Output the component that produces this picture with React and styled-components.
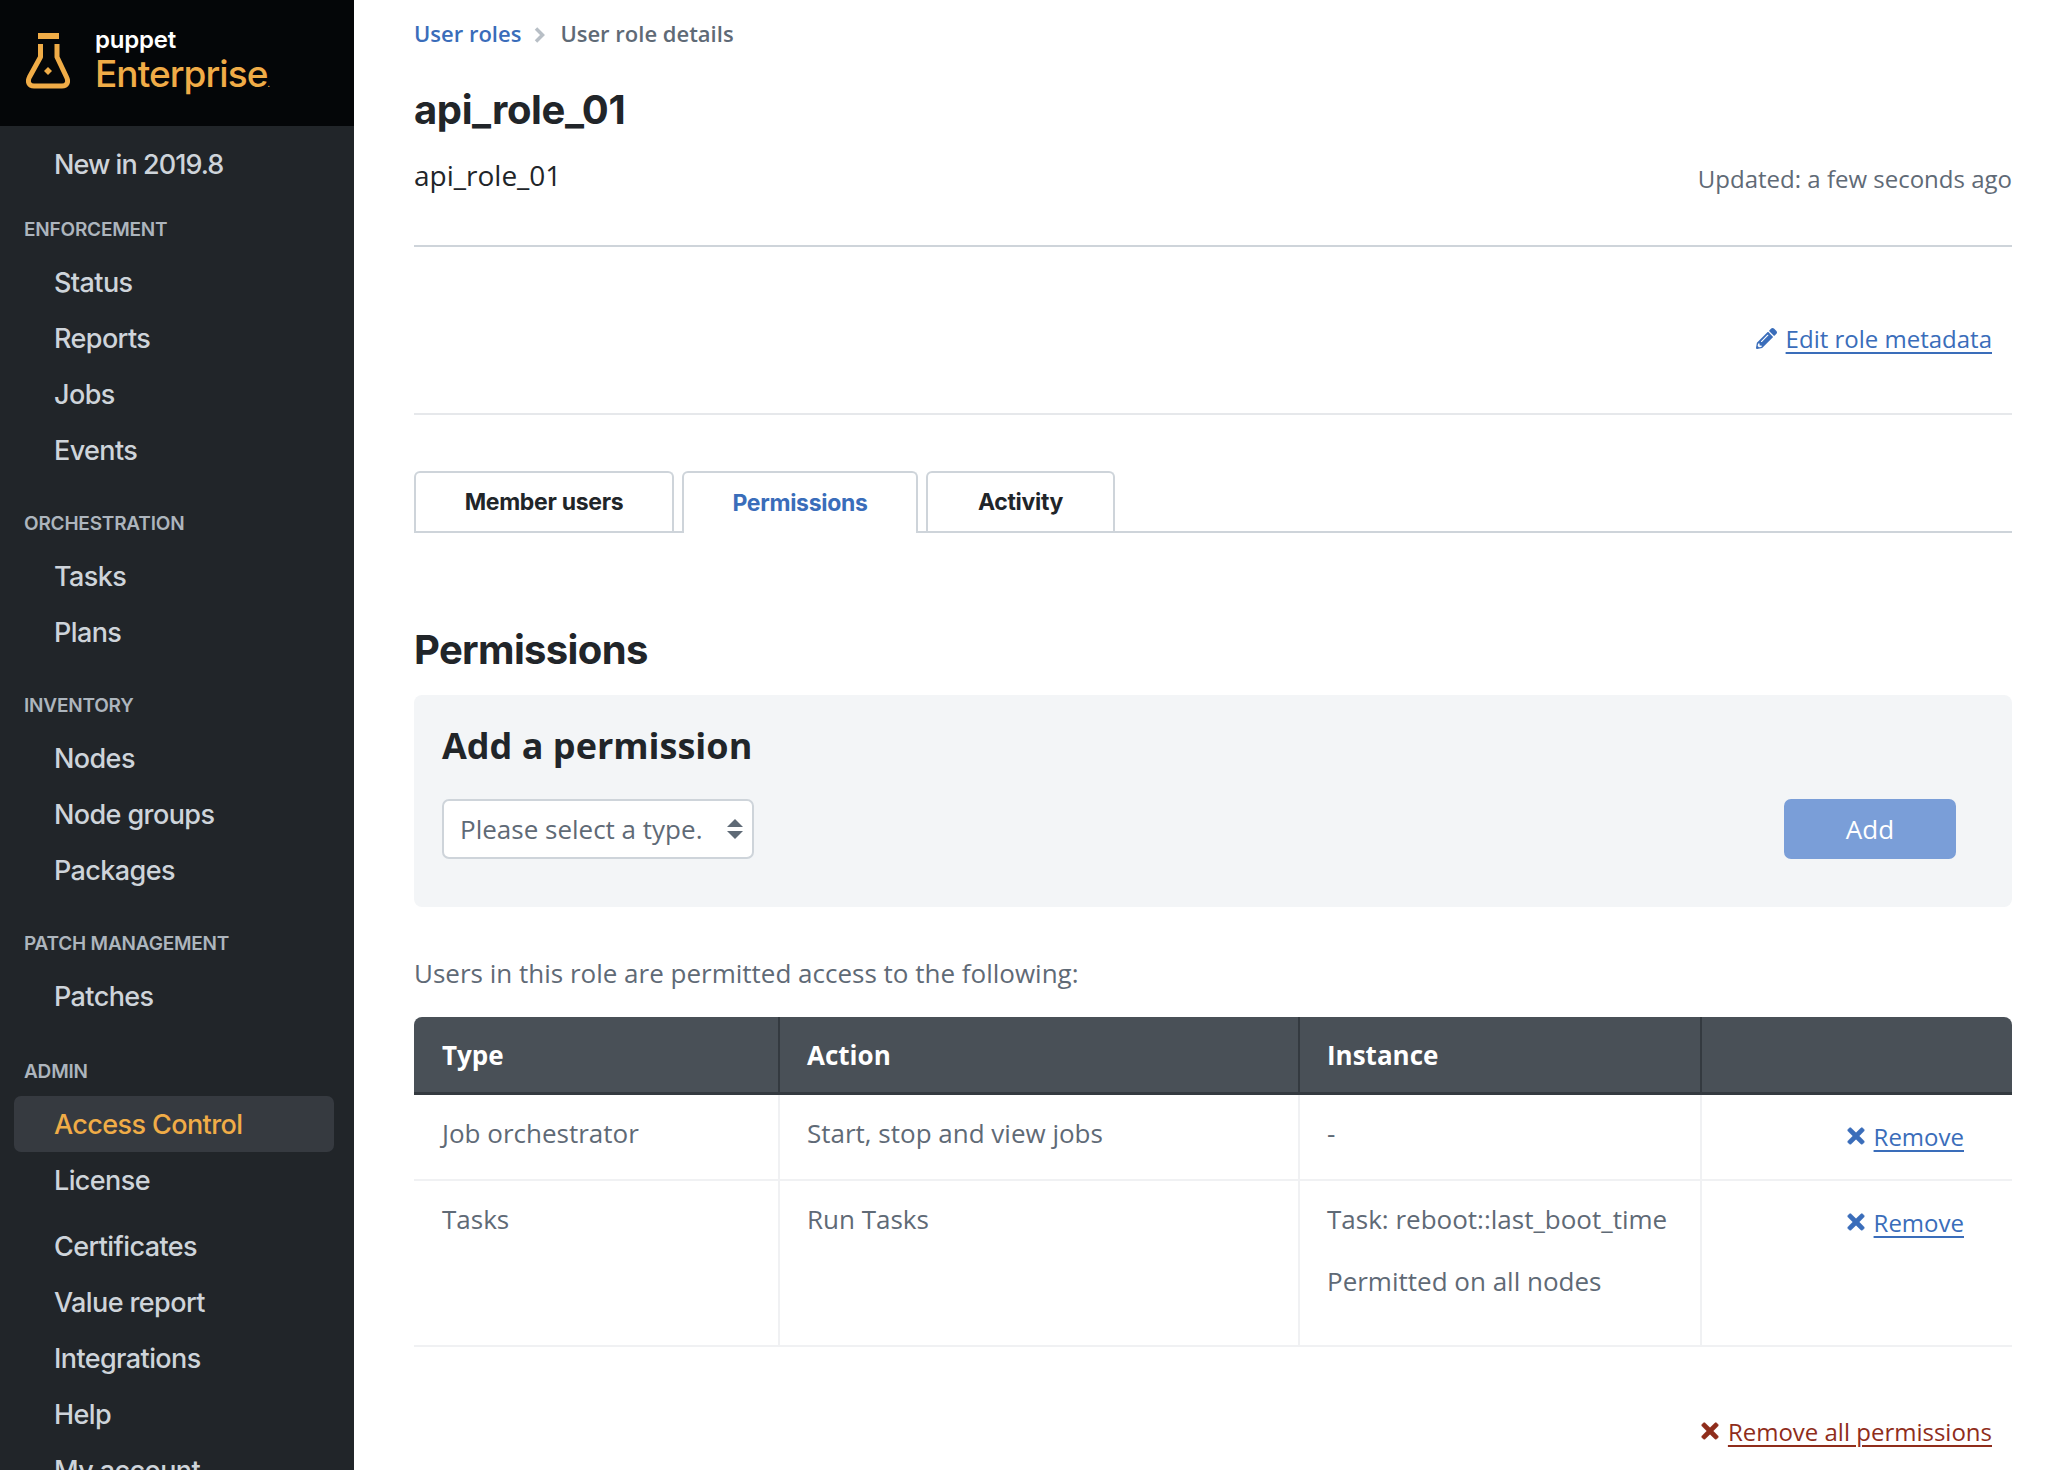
import React from 'react';
import styled, { createGlobalStyle } from 'styled-components';
import { FaPencilAlt, FaTimes } from 'react-icons/fa';

const Global = createGlobalStyle`
  html, body { margin: 0; padding: 0; height: 1470px; overflow: hidden; background: #fff; }
  * { box-sizing: border-box; }
`;
const Page = styled.div`display: flex; width: 2070px; height: 1470px; overflow: hidden; font-family: "Open Sans", sans-serif;`;
const Sidebar = styled.aside`width: 354px; flex: none; height: 1470px; overflow: hidden; background: #212529; font-family: Inter, sans-serif;`;
const Brand = styled.div`height: 126px; background: #040608; display: flex; align-items: flex-start; padding: 33px 0 0 26px; gap: 25px;`;
const BrandText = styled.div`display: flex; flex-direction: column;`;
const BrandTop = styled.span`color: #fff; font-size: 24px; font-weight: 600; line-height: 18px; letter-spacing: -0.2px; margin-top: -2px;`;
const BrandName = styled.span`color: #f0ac47; font-size: 37px; font-weight: 500; line-height: 46px; letter-spacing: -0.95px; margin-top: 2px;
  small { font-size: 8px; }`;
const Nav = styled.nav`display: flex; flex-direction: column; padding: 10px 20px 0 14px;`;
const Item = styled.a`display: flex; align-items: center; height: 56px; flex: none; padding-left: 40px; font-size: 27px; font-weight: 450;
  letter-spacing: ${p => p.$track || -0.6}px;
  color: ${p => p.$active ? '#f0ac47' : '#ced4da'};
  background: ${p => p.$active ? '#363a40' : 'transparent'};
  border-radius: 7px;
  margin-top: ${p => p.$gap || 0}px;`;
const Section = styled.div`height: 20px; display: flex; align-items: center; margin: ${p => p.$top}px 0 15px 10px; font-size: 19px; font-weight: 600; color: #adb5bd; letter-spacing: -0.2px; text-transform: uppercase;`;
const Main = styled.main`flex: none; width: 1658px; padding: 0 0 0 60px; height: 1470px; overflow: hidden;`;
const Column = styled.div`width: 1598px; display: flex; flex-direction: column;`;
const Crumbs = styled.div`display: flex; align-items: center; height: 24px; margin-top: 21px; font-size: 22px; font-weight: 600; color: #5f6a76;`;
const CrumbLink = styled.a`color: #3a6dba;`;
const CrumbSep = styled.svg`width: 12px; height: 16px; margin: 3px 15px 0 12px; color: #b8bfc6;`;
const Title = styled.h1`margin: 40px 0 0; font-family: Inter, sans-serif; font-size: 40px; line-height: 50px; font-weight: 700; color: #212529; letter-spacing: -0.4px;`;
const MetaRow = styled.div`display: flex; justify-content: space-between; align-items: flex-end; border-bottom: 2px solid #ced4da; height: 112px; padding-bottom: 46px;`;
const Subtitle = styled.span`font-size: 28px; line-height: 40px; color: #212529; margin-bottom: 4px;`;
const Updated = styled.span`font-size: 24px; line-height: 34px; color: #5f6a76; margin-bottom: 3px;`;
const EditRow = styled.div`height: 168px; border-bottom: 2px solid #e6e8eb; display: flex; justify-content: flex-end; padding: 73px 20px 0 0;`;
const TextLink = styled.a`display: inline-flex; align-items: center; align-self: flex-start; height: 36px; gap: ${p => p.$gap}px; font-size: 24px; color: ${p => p.$danger ? '#8f2d1b' : '#3a6dba'};
  span { text-decoration: underline; text-underline-offset: 4px; text-decoration-thickness: 2px; }
  svg { width: ${p => p.$size}px; height: ${p => p.$size}px; flex: none; stroke: currentColor; stroke-width: ${p => p.$heavy}; }`;
const Tabs = styled.div`display: flex; gap: 8px; height: 62px; margin-top: 56px; border-bottom: 2px solid #ced4da;`;
const Tab = styled.div`height: ${p => p.$active ? 62 : 60}px; width: ${p => p.$w}px; display: flex; align-items: center; justify-content: center; border: 2px solid #ced4da; border-radius: 6px 6px 0 0;
  border-bottom: 0; background: #fff; font-family: Inter, sans-serif; font-size: 23px; font-weight: 700; letter-spacing: -0.3px;
  color: ${p => p.$active ? '#3a6dba' : '#212529'};`;
const Heading = styled.h2`margin: 92px 0 0; font-family: Inter, sans-serif; font-size: 40px; line-height: 50px; font-weight: 700; color: #212529; letter-spacing: -0.65px;`;
const Panel = styled.section`margin-top: 20px; height: 212px; background: #f3f5f7; border-radius: 8px; padding: 28px 56px 0 28px; display: flex; flex-direction: column;`;
const PanelTitle = styled.h3`margin: 0; font-family: "Open Sans", sans-serif; font-size: 36px; line-height: 46px; font-weight: 700; color: #212529;`;
const PanelRow = styled.div`display: flex; justify-content: space-between; margin-top: 30px;`;
const Select = styled.div`width: 312px; height: 60px; background: #fff; border: 2px solid #ced4da; border-radius: 7px; display: flex; align-items: center; justify-content: space-between; padding: 0 8px 0 16px; font-size: 26px; color: #5f6a76;`;
const Arrows = styled.svg`width: 18px; height: 22px; color: #5f6a76;`;
const AddButton = styled.button`width: 172px; height: 60px; background: #7a9ed8; border: 0; border-radius: 7px; color: #fff; font: 400 26px "Open Sans", sans-serif;`;
const Intro = styled.p`margin: 48px 0 0; height: 36px; font-size: 26px; line-height: 36px; color: #5f6a76;`;
const Table = styled.table`margin-top: 26px; width: 1598px; border-collapse: separate; border-spacing: 0; table-layout: fixed; font-size: 26px; color: #5f6a76;`;
const Th = styled.th`height: 78px; padding: 0 27px; text-align: left; font-size: 26px; font-weight: 700; color: #fff; background: #495057; border-bottom: 3px solid #343a40; border-left: 2px solid #343a40;
  &:first-child { border-top-left-radius: 8px; border-left: 0; padding-left: 28px; }
  &:last-child { border-top-right-radius: 8px; }`;
const Td = styled.td`vertical-align: top; padding: 0 27px; border-bottom: 2px solid #f0f1f3; border-left: 2px solid #f0f1f3; height: ${p => p.$h}px;
  &:first-child { border-left: 0; padding-left: 28px; }`;
const CellText = styled.div`height: 62px; padding-top: 20px; line-height: 36px;`;
const ActionCell = styled.div`display: flex; justify-content: flex-end; padding: 23px 21px 0 0;`;
const Footer = styled.div`display: flex; justify-content: flex-end; padding: 66px 20px 0 0;`;

const Flask = () => (
  <svg width="44" height="56" viewBox="0 0 44 56" fill="none">
    <rect x="12" y="0" width="21" height="6" fill="#f0ac47"/>
    <path d="M14.5 11V24L3.5 44C1 49 3 53 8 53H36C41 53 43 49 40.5 44L31 24V11" stroke="#f0ac47" strokeWidth="5" strokeLinejoin="round"/>
    <path d="M22 34l4 4-4 4-4-4z" fill="#f0ac47"/>
  </svg>
);

const Link = ({ icon, children, danger, size = 24, gap = 6, heavy = 12 }) => (
  <TextLink $danger={danger} $size={size} $gap={gap} $heavy={heavy}>{icon}<span>{children}</span></TextLink>
);

const groups = [
  { title: 'Enforcement', top: 27, items: ['Status', 'Reports', 'Jobs', 'Events'] },
  { title: 'Orchestration', top: 35, items: ['Tasks', 'Plans'] },
  { title: 'Inventory', top: 35, items: ['Nodes', 'Node groups', 'Packages'] },
  { title: 'Patch management', top: 35, items: ['Patches'] },
];

export default function App() {
  return (
    <Page>
      <Global />
      <Sidebar>
        <Brand>
          <Flask />
          <BrandText>
            <BrandTop>puppet</BrandTop>
            <BrandName>Enterprise<small>.</small></BrandName>
          </BrandText>
        </Brand>
        <Nav>
          <Item $track={-0.95}>New in 2019.8</Item>
          {groups.map(g => (
            <React.Fragment key={g.title}>
              <Section $top={g.top}>{g.title}</Section>
              {g.items.map(i => <Item key={i}>{i}</Item>)}
            </React.Fragment>
          ))}
          <Section $top={37}>Admin</Section>
          <Item $active>Access Control</Item>
          <Item>License</Item>
          <Item $gap={10}>Certificates</Item>
          <Item>Value report</Item>
          <Item>Integrations</Item>
          <Item>Help</Item>
          <Item>My account</Item>
        </Nav>
      </Sidebar>
      <Main>
        <Column>
          <Crumbs>
            <CrumbLink>User roles</CrumbLink>
            <CrumbSep viewBox="0 0 12 16"><path d="M3 1.5l6.5 6.5L3 14.5" fill="none" stroke="currentColor" strokeWidth="3.5"/></CrumbSep>
            <span>User role details</span>
          </Crumbs>
          <Title>api_role_01</Title>
          <MetaRow>
            <Subtitle>api_role_01</Subtitle>
            <Updated>Updated: a few seconds ago</Updated>
          </MetaRow>
          <EditRow><Link size={21} gap={9} heavy={0} icon={<FaPencilAlt />}>Edit role metadata</Link></EditRow>
          <Tabs>
            <Tab $w={260}>Member users</Tab>
            <Tab $w={236} $active>Permissions</Tab>
            <Tab $w={189}>Activity</Tab>
          </Tabs>
          <Heading>Permissions</Heading>
          <Panel>
            <PanelTitle>Add a permission</PanelTitle>
            <PanelRow>
              <Select>
                <span>Please select a type.</span>
                <Arrows viewBox="0 0 18 22"><path d="M9 1l8 8H1zM9 21l-8-8h16z" fill="currentColor"/></Arrows>
              </Select>
              <AddButton>Add</AddButton>
            </PanelRow>
          </Panel>
          <Intro>Users in this role are permitted access to the following:</Intro>
          <Table>
            <colgroup><col width="364"/><col width="520"/><col width="402"/><col width="312"/></colgroup>
            <thead>
              <tr>
                <Th>Type</Th><Th>Action</Th><Th>Instance</Th><Th />
              </tr>
            </thead>
            <tbody>
              <tr>
                <Td $h={86}><CellText>Job orchestrator</CellText></Td>
                <Td><CellText>Start, stop and view jobs</CellText></Td>
                <Td><CellText>-</CellText></Td>
                <Td><ActionCell><Link icon={<FaTimes />}>Remove</Link></ActionCell></Td>
              </tr>
              <tr>
                <Td $h={166}><CellText>Tasks</CellText></Td>
                <Td><CellText>Run Tasks</CellText></Td>
                <Td><CellText>Task: reboot::last_boot_time</CellText><CellText>Permitted on all nodes</CellText></Td>
                <Td><ActionCell><Link icon={<FaTimes />}>Remove</Link></ActionCell></Td>
              </tr>
            </tbody>
          </Table>
          <Footer><Link danger icon={<FaTimes />}>Remove all permissions</Link></Footer>
        </Column>
      </Main>
    </Page>
  );
}
